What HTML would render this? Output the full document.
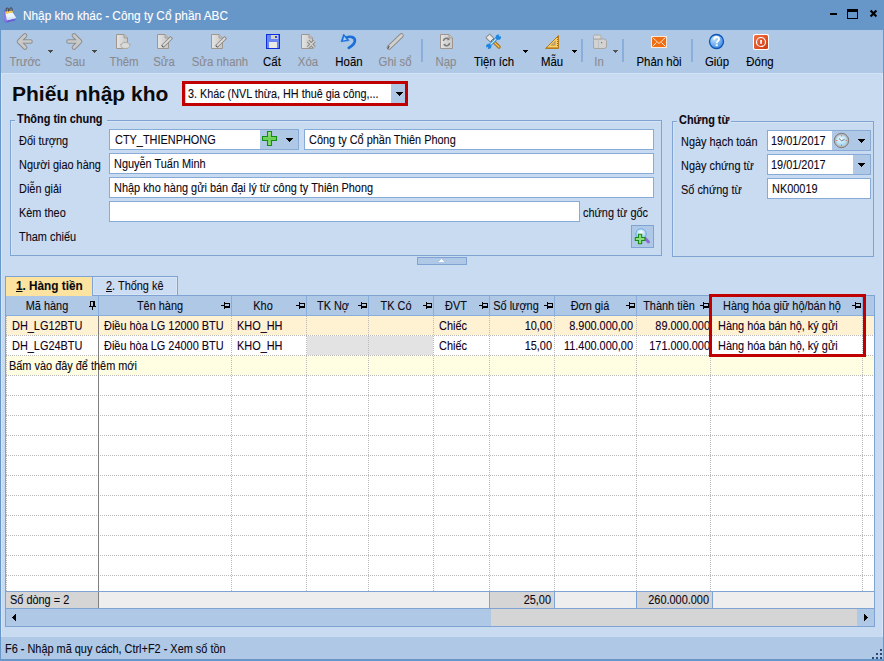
<!DOCTYPE html>
<html><head><meta charset="utf-8">
<style>
*{margin:0;padding:0;box-sizing:border-box}
html,body{width:884px;height:661px;overflow:hidden;background:#6796c8}
body{position:relative;font-family:"Liberation Sans",sans-serif;font-size:11px;color:#0c0814}
.a{position:absolute}
.t{position:absolute;white-space:nowrap;line-height:13px;font-size:12px;transform:scaleX(.91);transform-origin:0 0;-webkit-text-stroke:0.1px currentColor}
.tb{position:absolute;white-space:nowrap;line-height:14px;font-size:12px;text-align:center;width:80px;transform:scaleX(.95);transform-origin:50% 0;-webkit-text-stroke:0.1px currentColor}
.dis{color:#8c8a8e}
.en{color:#000}
.inp{position:absolute;background:#fff;border:1px solid #88aad6}
.btnz{position:absolute;background:#aec8e6}
.dd{position:absolute;width:0;height:0;border-left:4px solid transparent;border-right:4px solid transparent;border-top:4px solid #000}
.tri{position:absolute;width:0;height:0;border-left:3px solid transparent;border-right:3px solid transparent;border-top:3px solid #4a4a4a}
.sep{position:absolute;width:2px;background:#7ea3d1;top:39px;height:23px}
.hl{position:absolute;background:#7fa4d0}
</style></head><body>
<!-- title bar -->
<div class="a" style="left:0;top:0;width:884px;height:30px;background:#6796c8"></div>
<div class="t" style="left:23px;top:9px;font-size:12px;line-height:14px;color:#fff;transform:scaleX(.985);transform-origin:0 0">Nhập kho khác - Công ty Cổ phần ABC</div>
<svg class="a" style="left:0;top:1px" width="22" height="26" viewBox="0 0 22 26">
 <path d="M4 9.5L12.5 9L16 17.5L15 19.5L6.5 21.8L4 20Z" fill="#6b5fd6"/>
 <path d="M4.2 10L5.8 11L7 21L4.2 19.8Z" fill="#8a7ee8"/>
 <path d="M5.5 12.5L12.8 11.2L16.2 17L7 19.3Z" fill="#eaf5ff"/>
 <path d="M6.5 17L15 15.5L16.2 17L7 19.3Z" fill="#cfe6fb"/>
 <path d="M5.3 10.3L12.3 9.3L13 11.6L5.6 12.8Z" fill="#f6cf45"/>
 <path d="M6.3 10.5C5.8 8.5 6.2 7 7.4 7C8.6 7 8.8 8.8 8.4 10.5M10 10C9.6 8.2 10 6.8 11.1 6.8C12.2 6.8 12.3 8.6 12 10" fill="none" stroke="#4d4d57" stroke-width="1.1"/>
</svg>
<!-- window controls -->
<div class="a" style="left:830px;top:13px;width:7px;height:2px;background:#000"></div>
<div class="a" style="left:847px;top:9px;width:11px;height:10px;border:1px solid #000;border-top:3px solid #000"></div>
<svg class="a" style="left:869px;top:9px" width="9" height="9" viewBox="0 0 9 9"><path d="M1.6 1.6L7.4 7.4M7.4 1.6L1.6 7.4" stroke="#000" stroke-width="2.1"/></svg>

<!-- toolbar -->
<div class="a" style="left:1px;top:30px;width:882px;height:43px;background:#aec8e6"></div>
<!-- toolbar icons -->
<svg class="a" style="left:0;top:30px" width="884" height="43" viewBox="0 30 884 43">
 <defs>
  <linearGradient id="gdoc" x1="0" y1="0" x2="1" y2="0"><stop offset="0" stop-color="#e4e4e4"/><stop offset="1" stop-color="#c8c8c8"/></linearGradient>
  <radialGradient id="ghelp" cx="0.35" cy="0.3" r="0.75"><stop offset="0" stop-color="#c4e4ff"/><stop offset="1" stop-color="#3a8ae6"/></radialGradient>
 </defs>
 <!-- Truoc arrow -->
 <g fill="none" stroke-linecap="round" stroke-linejoin="round">
  <path d="M25 35.5L19 41.5L25 47.5M19.5 41.5H30.5" stroke="#8e8e8e" stroke-width="4.6"/>
  <path d="M25 35.5L19 41.5L25 47.5M19.5 41.5H30.5" stroke="#c9c9c9" stroke-width="2.6"/>
  <path d="M74 35.5L80 41.5L74 47.5M79.5 41.5H68.5" stroke="#8e8e8e" stroke-width="4.6"/>
  <path d="M74 35.5L80 41.5L74 47.5M79.5 41.5H68.5" stroke="#c9c9c9" stroke-width="2.6"/>
 </g>
 <path d="M48 50h5v1h-5zM49 51h3v1h-3zM50 52h1v1h-1z" fill="#4a4a4a" shape-rendering="crispEdges"/>
 <path d="M92 50h5v1h-5zM93 51h3v1h-3zM94 52h1v1h-1z" fill="#4a4a4a" shape-rendering="crispEdges"/>
 <!-- Them doc -->
 <path d="M116.5 34.5H124.0L127.5 38.0V48.5H116.5Z" fill="url(#gdoc)" stroke="#9f978f"/><path d="M124.0 34.5V38.0H127.5" fill="#c4c0bc" stroke="#9f978f" stroke-width="0.8"/><path d="M121 45.5a4.3 3 0 1 0 8.6 0a4.3 3 0 1 0 -8.6 0Z" fill="#dadada" stroke="#b0aaa4" stroke-width="0.9"/><path d="M120 44.5h1.5M129 44.5h2M124 41.5v1.2M127 41.5v1.2" stroke="#b4aea8" stroke-width="1"/>
 <!-- Sua doc + pencil -->
 <path d="M157.5 34.5H165.0L168.5 38.0V48.5H157.5Z" fill="url(#gdoc)" stroke="#9f978f"/><path d="M165.0 34.5V38.0H168.5" fill="#c4c0bc" stroke="#9f978f" stroke-width="0.8"/><path d="M163.5 45.5L170.5 38.5" stroke="#8f8a85" stroke-width="3.6" stroke-linecap="square"/><path d="M163.5 45.5L170.5 38.5" stroke="#dedede" stroke-width="1.8" stroke-linecap="square"/><path d="M162.3 46.7l0.9 -0.9" stroke="#444" stroke-width="1.2"/>
 <!-- Sua nhanh -->
 <path d="M211.5 34.5H219.0L222.5 38.0V48.5H211.5Z" fill="url(#gdoc)" stroke="#9f978f"/><path d="M219.0 34.5V38.0H222.5" fill="#c4c0bc" stroke="#9f978f" stroke-width="0.8"/><path d="M217.5 45.5L224.5 38.5" stroke="#8f8a85" stroke-width="3.6" stroke-linecap="square"/><path d="M217.5 45.5L224.5 38.5" stroke="#dedede" stroke-width="1.8" stroke-linecap="square"/><path d="M216.3 46.7l0.9 -0.9" stroke="#444" stroke-width="1.2"/>
 <!-- Cat floppy -->
 <rect x="266" y="34" width="14" height="15" fill="#0b2fdc"/>
 <rect x="267" y="35" width="12" height="13" fill="#6a86f2"/>
 <rect x="271" y="35" width="7" height="4" fill="#d6d2cc"/>
 <rect x="275" y="36" width="2" height="2" fill="#2c48e8"/>
 <rect x="269" y="42" width="8" height="6" fill="#ebe9e6"/>
 <!-- Xoa -->
 <path d="M301.5 34.5H309.0L312.5 38.0V48.5H301.5Z" fill="url(#gdoc)" stroke="#9f978f"/><path d="M309.0 34.5V38.0H312.5" fill="#c4c0bc" stroke="#9f978f" stroke-width="0.8"/><path d="M308 41L314.5 47.5M314.5 41L308 47.5" stroke="#8f8a85" stroke-width="3.4"/><path d="M308 41L314.5 47.5M314.5 41L308 47.5" stroke="#d4d4d4" stroke-width="1.4"/>
 <!-- Hoan undo -->
 <path d="M345.5 38C350.5 35.5 355.5 37 354.8 41.5C354.3 44.5 351 46.5 348.8 47.8" fill="none" stroke="#1a70d8" stroke-width="2.7" stroke-linecap="round"/>
 <path d="M341 41.8L343.6 34L349.2 40.6Z" fill="#1a70d8" stroke="#1a70d8" stroke-width="0.6" stroke-linejoin="round"/>
 <path d="M343 40.5L344.2 36.6L346.8 39.8Z" fill="#a8d4fa"/>
 <!-- Ghi so pencil -->
 <path d="M389 47.5L401.5 35.5" stroke="#8e8a86" stroke-width="4.6" stroke-linecap="round"/>
 <path d="M389 47.5L401.5 35.5" stroke="#d2d2d2" stroke-width="2.8" stroke-linecap="round"/>
 <path d="M387.8 48.8L389.2 46" stroke="#555" stroke-width="1.2"/>
 <!-- Nap doc -->
 <path d="M440.5 34.5H449.0L452.5 38.0V48.5H440.5Z" fill="url(#gdoc)" stroke="#9f978f"/><path d="M449.0 34.5V38.0H452.5" fill="#c4c0bc" stroke="#9f978f" stroke-width="0.8"/><path d="M443.5 41C443.5 38.5 446.5 37.5 448.5 39M449.5 43C449.5 45.5 446.5 46.5 444.5 45" fill="none" stroke="#7a7a7a" stroke-width="1.5"/><path d="M447.5 37.5L450 39.5L447.5 40.5ZM445.5 46.5L443 44.5L445.5 43.5Z" fill="#7a7a7a"/>
 <!-- Tien ich tools -->
 <path d="M492 40L499 47" stroke="#a86a18" stroke-width="3.4" stroke-linecap="round"/>
 <path d="M492 40L499 47" stroke="#f2c24e" stroke-width="1.4" stroke-linecap="round"/>
 <path d="M485.8 37.6L489.6 34.2L493.8 38.2L490.2 41.8Z" fill="#e8e8e8" stroke="#666" stroke-width="0.9"/>
 <path d="M489.5 45.5L497.5 37.5" stroke="#1f86e0" stroke-width="3" stroke-linecap="round"/>
 <path d="M489.5 45.5L497.5 37.5" stroke="#c8ecff" stroke-width="1.1" stroke-linecap="round"/>
 <circle cx="498.3" cy="37.2" r="2.6" fill="#1f86e0"/>
 <circle cx="488.7" cy="46.3" r="2.6" fill="#1f86e0"/>
 <path d="M499.3 36.2l2.5 -2.5" stroke="#aec8e6" stroke-width="1.8"/>
 <path d="M487.7 47.3l-2.5 2.5" stroke="#aec8e6" stroke-width="1.8"/>
 <!-- Mau ruler -->
 <path d="M545.5 48.5L558.5 35.5V48.5Z" fill="#f6d068" stroke="#b57a1e" stroke-width="1" stroke-linejoin="round"/>
 <path d="M550.5 45.5L555.5 40.5V45.5Z" fill="#c08a3a"/>
 <path d="M552.3 44.5L554.5 42.3V44.5Z" fill="#aec8e6"/>
 <rect x="546.5" y="47" width="1" height="1" fill="#a86a18"/><rect x="548.5" y="47" width="1" height="1" fill="#a86a18"/><rect x="550.5" y="47" width="1" height="1" fill="#a86a18"/><rect x="552.5" y="47" width="1" height="1" fill="#a86a18"/><rect x="554.5" y="47" width="1" height="1" fill="#a86a18"/><rect x="556.5" y="47" width="1" height="1" fill="#a86a18"/><rect x="557" y="37" width="1" height="1" fill="#a86a18"/><rect x="557" y="39" width="1" height="1" fill="#a86a18"/><rect x="557" y="41" width="1" height="1" fill="#a86a18"/><rect x="557" y="43" width="1" height="1" fill="#a86a18"/><rect x="557" y="45" width="1" height="1" fill="#a86a18"/>
 <!-- In printer -->
 <path d="M593.5 40.5Q593.5 39 595 39H604.5Q606.5 39 606.5 41.5V46Q606.5 48.5 604 48.5H595Q593.5 48.5 593.5 47Z" fill="#d2d2d2" stroke="#a9a5a1" stroke-width="1"/>
 <path d="M593.5 36.5Q593.5 35 595 35H599.5Q601 35 601 36.5V39H593.5Z" fill="#d8d8d8" stroke="#aaa6a2" stroke-width="0.9"/>
 <path d="M598.5 39.5V48" stroke="#bdbdbd" stroke-width="0.8"/>
 <rect x="601" y="42" width="1.2" height="1.2" fill="#777"/>
 <path d="M613 50h5v1h-5zM614 51h3v1h-3zM615 52h1v1h-1z" fill="#555" shape-rendering="crispEdges"/>
 <!-- Phan hoi envelope -->
 <rect x="651" y="36" width="16" height="12" fill="#fbe9da"/>
 <rect x="652" y="37" width="14" height="10" fill="#f06d12"/>
 <path d="M652.5 37.5L659 43.5L665.5 37.5M652.5 46.5L656.5 42.5M665.5 46.5L661.5 42.5" fill="none" stroke="#fde6d2" stroke-width="1"/>
 <!-- Giup -->
 <circle cx="716.5" cy="41.5" r="7" fill="url(#ghelp)" stroke="#0d55b5" stroke-width="1.3"/>
 <path d="M714.2 39.6C714.2 36.2 719 36.2 719 39.3C719 41 716.7 41.3 716.7 43.2" fill="none" stroke="#fff" stroke-width="1.9"/>
 <rect x="715.7" y="44.3" width="2" height="1.9" fill="#fff"/>
 <!-- Dong -->
 <defs><linearGradient id="gdong" x1="0" y1="0" x2="1" y2="1"><stop offset="0" stop-color="#f07048"/><stop offset="1" stop-color="#d23a0c"/></linearGradient></defs>
 <rect x="753" y="34" width="16" height="16" rx="2" fill="#fff"/>
 <rect x="754" y="35" width="14" height="14" rx="1.5" fill="url(#gdong)"/>
 <circle cx="761" cy="42" r="4.5" fill="none" stroke="#fff" stroke-width="1.2"/>
 <rect x="760.2" y="40" width="1.7" height="3.8" fill="#fff"/>
 <!-- separators -->
 <rect x="421" y="39" width="2" height="23" fill="#8aaedb"/>
 <rect x="581" y="39" width="2" height="23" fill="#8aaedb"/>
 <rect x="622" y="39" width="2" height="23" fill="#8aaedb"/>
 <rect x="691" y="39" width="2" height="23" fill="#8aaedb"/>
 <path d="M523 50h5v1h-5zM524 51h3v1h-3zM525 52h1v1h-1z" fill="#000" shape-rendering="crispEdges"/>
 <path d="M572 50h5v1h-5zM573 51h3v1h-3zM574 52h1v1h-1z" fill="#000" shape-rendering="crispEdges"/>
</svg>
<!-- toolbar labels -->
<div class="tb dis" style="left:-15.5px;top:55px">Trước</div>
<div class="tb dis" style="left:34.5px;top:55px">Sau</div>
<div class="tb dis" style="left:84.25px;top:55px">Thêm</div>
<div class="tb dis" style="left:124px;top:55px">Sửa</div>
<div class="tb dis" style="left:179.5px;top:55px">Sửa nhanh</div>
<div class="tb en" style="left:232.4px;top:55px">Cất</div>
<div class="tb dis" style="left:267.5px;top:55px">Xóa</div>
<div class="tb en" style="left:308.5px;top:55px">Hoãn</div>
<div class="tb dis" style="left:355.3px;top:55px">Ghi sổ</div>
<div class="tb dis" style="left:406px;top:55px">Nạp</div>
<div class="tb en" style="left:454px;top:55px">Tiện ích</div>
<div class="tb en" style="left:511.5px;top:55px">Mẫu</div>
<div class="tb dis" style="left:559.2px;top:55px">In</div>
<div class="tb en" style="left:619.3px;top:55px">Phản hồi</div>
<div class="tb en" style="left:677px;top:55px">Giúp</div>
<div class="tb en" style="left:720.4px;top:55px">Đóng</div>

<!-- content -->
<div class="a" style="left:1px;top:73px;width:882px;height:564px;background:#c9dbf1"></div>
<div class="a" style="left:1px;top:73px;width:1px;height:564px;background:#d6e4f6"></div>
<div class="a" style="left:882px;top:73px;width:1px;height:564px;background:#d6e4f6"></div>
<div class="a" style="left:1px;top:73px;width:882px;height:1px;background:#d3e2f5"></div>
<!-- header title -->
<div class="a" style="left:12px;top:82px;font-size:21px;line-height:24px;font-weight:bold;color:#0a0a0a;white-space:nowrap">Phiếu nhập kho</div>
<!-- combo red -->
<div class="a" style="left:182px;top:81px;width:226px;height:25px;border:3px solid #c00000;background:#fff"></div>
<div class="a" style="left:185px;top:84px;width:1px;height:19px;background:#b9d4f2"></div>
<div class="btnz" style="left:391px;top:84px;width:14px;height:19px"></div>
<svg class="a" style="left:396px;top:92px" width="7" height="4" shape-rendering="crispEdges"><path d="M0 0h7v1H0zM1 1h5v1H1zM2 2h3v1H2zM3 3h1v1H3z" fill="#000"/></svg>
<div class="t" style="left:188px;top:88px;transform:scaleX(.9)">3. Khác (NVL thừa, HH thuê gia công,...</div>

<!-- group Thong tin chung -->
<div class="a" style="left:10px;top:120px;width:652px;height:136px;border:1px solid #7fa3d3;box-shadow:inset 1px 1px 0 #d6e4f5"></div>
<div class="a" style="left:15px;top:114px;width:92px;height:10px;background:#c9dbf1"></div>
<div class="t" style="left:17px;top:113px;font-weight:bold">Thông tin chung</div>
<div class="t" style="left:19px;top:135px">Đối tượng</div>
<div class="t" style="left:19px;top:159px">Người giao hàng</div>
<div class="t" style="left:19px;top:183px">Diễn giải</div>
<div class="t" style="left:19px;top:207px">Kèm theo</div>
<div class="t" style="left:19px;top:231px">Tham chiếu</div>

<div class="inp" style="left:109px;top:129px;width:190px;height:21px"></div>
<div class="btnz" style="left:260px;top:130px;width:38px;height:19px"></div>
<svg class="a" style="left:262px;top:131px" width="16" height="16" viewBox="0 0 16 16">
 <defs><linearGradient id="gplus" x1="0" y1="0" x2="0" y2="1"><stop offset="0" stop-color="#a8e890"/><stop offset="0.5" stop-color="#6ccf55"/><stop offset="1" stop-color="#8ee070"/></linearGradient></defs>
 <path d="M5.5 0.5H9.5V5.5H14.5V9.5H9.5V14.5H5.5V9.5H0.5V5.5H5.5Z" fill="url(#gplus)" stroke="#168a16" stroke-width="1.1"/>
</svg>
<svg class="a" style="left:286px;top:138px" width="7" height="4" shape-rendering="crispEdges"><path d="M0 0h7v1H0zM1 1h5v1H1zM2 2h3v1H2zM3 3h1v1H3z" fill="#000"/></svg>
<div class="t" style="left:115px;top:134px">CTY_THIENPHONG</div>
<div class="inp" style="left:304px;top:129px;width:350px;height:21px"></div>
<div class="t" style="left:309px;top:134px">Công ty Cổ phần Thiên Phong</div>
<div class="inp" style="left:109px;top:153px;width:545px;height:21px"></div>
<div class="t" style="left:114px;top:158px">Nguyễn Tuấn Minh</div>
<div class="inp" style="left:109px;top:177px;width:545px;height:21px"></div>
<div class="t" style="left:114px;top:182px">Nhập kho hàng gửi bán đại lý từ công ty Thiên Phong</div>
<div class="inp" style="left:109px;top:201px;width:471px;height:21px"></div>
<div class="t" style="left:583px;top:207px">chứng từ gốc</div>
<div class="a" style="left:631px;top:225px;width:23px;height:23px;border:1px solid #7fa3d3;background:#aec8e6"></div>
<svg class="a" style="left:633px;top:227px" width="20" height="20" viewBox="0 0 20 20">
 <defs><radialGradient id="glens" cx="0.5" cy="0.35" r="0.6"><stop offset="0" stop-color="#ffffff"/><stop offset="1" stop-color="#8cc8f0"/></radialGradient></defs>
 <circle cx="8" cy="7" r="5.2" fill="url(#glens)" stroke="#6aaee6" stroke-width="1"/>
 <path d="M12.3 11.5L15.5 15" stroke="#8a6ed6" stroke-width="3" stroke-linecap="round"/>
 <path d="M5.5 7.3H8.7V10.5H11.9V13.5H8.7V16.7H5.5V13.5H2.3V10.5H5.5Z" fill="#8edc7a" stroke="#1a8a1a" stroke-width="1.1"/>
</svg>
<!-- collapse button -->
<div class="a" style="left:417px;top:257px;width:50px;height:8px;border:1px solid #7fa3d3;background:#aec8e6"></div>
<svg class="a" style="left:439px;top:259px" width="5" height="3" shape-rendering="crispEdges"><path d="M2 0h1v1h-1zM1 1h3v1h-3zM0 2h5v1h-5z" fill="#fff"/></svg>

<!-- group Chung tu -->
<div class="a" style="left:672px;top:121px;width:202px;height:136px;border:1px solid #7fa3d3;box-shadow:inset 1px 1px 0 #d6e4f5"></div>
<div class="a" style="left:677px;top:114px;width:54px;height:10px;background:#c9dbf1"></div>
<div class="t" style="left:679px;top:114px;font-weight:bold">Chứng từ</div>
<div class="t" style="left:681px;top:136px">Ngày hạch toán</div>
<div class="t" style="left:681px;top:160px">Ngày chứng từ</div>
<div class="t" style="left:681px;top:184px">Số chứng từ</div>
<div class="inp" style="left:767px;top:130px;width:104px;height:21px"></div>
<div class="btnz" style="left:832px;top:131px;width:38px;height:19px"></div>
<svg class="a" style="left:833px;top:132px" width="17" height="17" viewBox="0 0 17 17">
 <defs><radialGradient id="gclk" cx="0.45" cy="0.4" r="0.6"><stop offset="0" stop-color="#f4fbff"/><stop offset="1" stop-color="#9ed4f0"/></radialGradient></defs>
 <circle cx="8.5" cy="8.5" r="7.2" fill="#b9b9b9" stroke="#7a7a7a" stroke-width="1"/>
 <circle cx="8.5" cy="8.5" r="5.6" fill="url(#gclk)"/>
 <path d="M8.5 8.8L6 6.5M8.5 8.8L11.5 7.5" stroke="#555" stroke-width="0.8"/>
 <circle cx="8.5" cy="3.8" r="0.6" fill="#e05030"/><circle cx="8.5" cy="13.2" r="0.6" fill="#e05030"/><circle cx="3.8" cy="8.5" r="0.6" fill="#e05030"/><circle cx="13.2" cy="8.5" r="0.6" fill="#e05030"/>
</svg>
<svg class="a" style="left:858px;top:139px" width="7" height="4" shape-rendering="crispEdges"><path d="M0 0h7v1H0zM1 1h5v1H1zM2 2h3v1H2zM3 3h1v1H3z" fill="#000"/></svg>
<div class="t" style="left:771px;top:135px">19/01/2017</div>
<div class="inp" style="left:767px;top:154px;width:104px;height:21px"></div>
<div class="btnz" style="left:853px;top:155px;width:17px;height:19px"></div>
<svg class="a" style="left:858px;top:163px" width="7" height="4" shape-rendering="crispEdges"><path d="M0 0h7v1H0zM1 1h5v1H1zM2 2h3v1H2zM3 3h1v1H3z" fill="#000"/></svg>
<div class="t" style="left:771px;top:159px">19/01/2017</div>
<div class="inp" style="left:767px;top:178px;width:104px;height:21px"></div>
<div class="t" style="left:772px;top:183px">NK00019</div>

<!-- grid -->
<div class="a" style="left:5px;top:295px;width:870px;height:332px;border:1px solid #7fa3d3;background:#fff"></div>
<div class="a" style="left:5px;top:276px;width:87px;height:20px;border:1px solid #7fa3d3;border-bottom:none;border-right:none;background:#fde3a0"></div>
<div class="a" style="left:92px;top:276px;width:86px;height:20px;border:1px solid #7fa3d3;background:#ccdcf2;box-shadow:inset 0 0 0 1px #d6e4f5"></div>
<div class="t" style="left:16px;top:280px;font-weight:bold;color:#0a0a0a;transform:scaleX(.98)"><u>1</u>. Hàng tiền</div>
<div class="t" style="left:106px;top:280px;color:#0c0814"><u>2</u>. Thống kê</div>
<div class="a" style="left:6px;top:296px;width:868px;height:20px;background:#aec8e6;border-bottom:1px solid #8aaedb"></div>
<div class="a" style="left:98px;top:296px;width:1px;height:19px;background:#8aaedb"></div>
<div class="a" style="left:231px;top:296px;width:1px;height:19px;background:#8aaedb"></div>
<div class="a" style="left:306px;top:296px;width:1px;height:19px;background:#8aaedb"></div>
<div class="a" style="left:368px;top:296px;width:1px;height:19px;background:#8aaedb"></div>
<div class="a" style="left:433px;top:296px;width:1px;height:19px;background:#8aaedb"></div>
<div class="a" style="left:489px;top:296px;width:1px;height:19px;background:#8aaedb"></div>
<div class="a" style="left:554px;top:296px;width:1px;height:19px;background:#8aaedb"></div>
<div class="a" style="left:636px;top:296px;width:1px;height:19px;background:#8aaedb"></div>
<div class="a" style="left:710px;top:296px;width:1px;height:19px;background:#8aaedb"></div>
<div class="a" style="left:862px;top:296px;width:1px;height:19px;background:#8aaedb"></div>
<div class="a" style="left:6px;top:316px;width:868px;height:19px;background:#fff2d2"></div>
<div class="a" style="left:6px;top:356px;width:868px;height:19px;background:#fffde2"></div>
<div class="a" style="left:307px;top:336px;width:126px;height:19px;background:#e3e3e3"></div>
<div class="a" style="left:6px;top:335px;width:868px;height:1px;background-image:linear-gradient(90deg,#bababa 50%,transparent 50%);background-size:2px 1px"></div>
<div class="a" style="left:6px;top:355px;width:868px;height:1px;background-image:linear-gradient(90deg,#bababa 50%,transparent 50%);background-size:2px 1px"></div>
<div class="a" style="left:6px;top:375px;width:868px;height:1px;background-image:linear-gradient(90deg,#bababa 50%,transparent 50%);background-size:2px 1px"></div>
<div class="a" style="left:6px;top:395px;width:868px;height:1px;background-image:linear-gradient(90deg,#bababa 50%,transparent 50%);background-size:2px 1px"></div>
<div class="a" style="left:6px;top:415px;width:868px;height:1px;background-image:linear-gradient(90deg,#bababa 50%,transparent 50%);background-size:2px 1px"></div>
<div class="a" style="left:6px;top:435px;width:868px;height:1px;background-image:linear-gradient(90deg,#bababa 50%,transparent 50%);background-size:2px 1px"></div>
<div class="a" style="left:6px;top:455px;width:868px;height:1px;background-image:linear-gradient(90deg,#bababa 50%,transparent 50%);background-size:2px 1px"></div>
<div class="a" style="left:6px;top:475px;width:868px;height:1px;background-image:linear-gradient(90deg,#bababa 50%,transparent 50%);background-size:2px 1px"></div>
<div class="a" style="left:6px;top:495px;width:868px;height:1px;background-image:linear-gradient(90deg,#bababa 50%,transparent 50%);background-size:2px 1px"></div>
<div class="a" style="left:6px;top:515px;width:868px;height:1px;background-image:linear-gradient(90deg,#bababa 50%,transparent 50%);background-size:2px 1px"></div>
<div class="a" style="left:6px;top:535px;width:868px;height:1px;background-image:linear-gradient(90deg,#bababa 50%,transparent 50%);background-size:2px 1px"></div>
<div class="a" style="left:6px;top:555px;width:868px;height:1px;background-image:linear-gradient(90deg,#bababa 50%,transparent 50%);background-size:2px 1px"></div>
<div class="a" style="left:6px;top:575px;width:868px;height:1px;background-image:linear-gradient(90deg,#bababa 50%,transparent 50%);background-size:2px 1px"></div>
<div class="a" style="left:231px;top:316px;width:1px;height:275px;background-image:linear-gradient(#bababa 50%,transparent 50%);background-size:1px 2px"></div>
<div class="a" style="left:306px;top:316px;width:1px;height:275px;background-image:linear-gradient(#bababa 50%,transparent 50%);background-size:1px 2px"></div>
<div class="a" style="left:368px;top:316px;width:1px;height:275px;background-image:linear-gradient(#bababa 50%,transparent 50%);background-size:1px 2px"></div>
<div class="a" style="left:433px;top:316px;width:1px;height:275px;background-image:linear-gradient(#bababa 50%,transparent 50%);background-size:1px 2px"></div>
<div class="a" style="left:489px;top:316px;width:1px;height:275px;background-image:linear-gradient(#bababa 50%,transparent 50%);background-size:1px 2px"></div>
<div class="a" style="left:554px;top:316px;width:1px;height:275px;background-image:linear-gradient(#bababa 50%,transparent 50%);background-size:1px 2px"></div>
<div class="a" style="left:636px;top:316px;width:1px;height:275px;background-image:linear-gradient(#bababa 50%,transparent 50%);background-size:1px 2px"></div>
<div class="a" style="left:710px;top:316px;width:1px;height:275px;background-image:linear-gradient(#bababa 50%,transparent 50%);background-size:1px 2px"></div>
<div class="a" style="left:862px;top:316px;width:1px;height:275px;background-image:linear-gradient(#bababa 50%,transparent 50%);background-size:1px 2px"></div>
<div class="a" style="left:6px;top:316px;width:1px;height:275px;background-image:linear-gradient(#bababa 50%,transparent 50%);background-size:1px 2px"></div>
<div class="a" style="left:98px;top:316px;width:1px;height:275px;background:#808080"></div>
<div class="t" style="left:-53px;top:300px;width:200px;text-align:center;transform-origin:50% 0;color:#0c0814">Mã hàng</div>
<div class="t" style="left:59.5px;top:300px;width:200px;text-align:center;transform-origin:50% 0;color:#0c0814">Tên hàng</div>
<div class="t" style="left:163.39999999999998px;top:300px;width:200px;text-align:center;transform-origin:50% 0;color:#0c0814">Kho</div>
<div class="t" style="left:232.60000000000002px;top:300px;width:200px;text-align:center;transform-origin:50% 0;color:#0c0814">TK Nợ</div>
<div class="t" style="left:296.2px;top:300px;width:200px;text-align:center;transform-origin:50% 0;color:#0c0814">TK Có</div>
<div class="t" style="left:355.5px;top:300px;width:200px;text-align:center;transform-origin:50% 0;color:#0c0814">ĐVT</div>
<div class="t" style="left:416.20000000000005px;top:300px;width:200px;text-align:center;transform-origin:50% 0;color:#0c0814">Số lượng</div>
<div class="t" style="left:489.70000000000005px;top:300px;width:200px;text-align:center;transform-origin:50% 0;color:#0c0814">Đơn giá</div>
<div class="t" style="left:568.6px;top:300px;width:200px;text-align:center;transform-origin:50% 0;color:#0c0814">Thành tiền</div>
<div class="t" style="left:682.2px;top:300px;width:200px;text-align:center;transform-origin:50% 0;color:#0c0814">Hàng hóa giữ hộ/bán hộ</div>
<svg class="a" style="left:0;top:296px" width="884" height="20" viewBox="0 296 884 20" shape-rendering="crispEdges"><path d="M90 301h5v1h-5zM90 301h1v5h-1zM93 301h2v5h-2zM89 306h7v1h-7zM92 307h1v3h-1z" fill="#000"/><path d="M221 305h3v1h-3zM224 302h1v7h-1zM225 303h5v1h-5zM225 306h5v2h-5zM229 303h1v5h-1z" fill="#000"/><path d="M296 305h3v1h-3zM299 302h1v7h-1zM300 303h5v1h-5zM300 306h5v2h-5zM304 303h1v5h-1z" fill="#000"/><path d="M358 305h3v1h-3zM361 302h1v7h-1zM362 303h5v1h-5zM362 306h5v2h-5zM366 303h1v5h-1z" fill="#000"/><path d="M423 305h3v1h-3zM426 302h1v7h-1zM427 303h5v1h-5zM427 306h5v2h-5zM431 303h1v5h-1z" fill="#000"/><path d="M479 305h3v1h-3zM482 302h1v7h-1zM483 303h5v1h-5zM483 306h5v2h-5zM487 303h1v5h-1z" fill="#000"/><path d="M544 305h3v1h-3zM547 302h1v7h-1zM548 303h5v1h-5zM548 306h5v2h-5zM552 303h1v5h-1z" fill="#000"/><path d="M626 305h3v1h-3zM629 302h1v7h-1zM630 303h5v1h-5zM630 306h5v2h-5zM634 303h1v5h-1z" fill="#000"/><path d="M700 305h3v1h-3zM703 302h1v7h-1zM704 303h5v1h-5zM704 306h5v2h-5zM708 303h1v5h-1z" fill="#000"/><path d="M852 305h3v1h-3zM855 302h1v7h-1zM856 303h5v1h-5zM856 306h5v2h-5zM860 303h1v5h-1z" fill="#000"/></svg>
<div class="t" style="left:12px;top:320px;color:#10001c">DH_LG12BTU</div>
<div class="t" style="left:104px;top:320px;color:#10001c">Điều hòa LG 12000 BTU</div>
<div class="t" style="left:237px;top:320px;color:#10001c">KHO_HH</div>
<div class="t" style="left:439px;top:320px;color:#10001c">Chiếc</div>
<div class="t" style="left:490px;top:320px;width:62px;text-align:right;transform-origin:100% 0;color:#10001c">10,00</div>
<div class="t" style="left:555px;top:320px;width:78px;text-align:right;transform-origin:100% 0;color:#10001c">8.900.000,00</div>
<div class="t" style="left:637px;top:320px;width:73px;text-align:right;transform-origin:100% 0;color:#10001c">89.000.000</div>
<div class="t" style="left:718px;top:320px;color:#10001c">Hàng hóa bán hộ, ký gửi</div>
<div class="t" style="left:12px;top:340px;color:#10001c">DH_LG24BTU</div>
<div class="t" style="left:104px;top:340px;color:#10001c">Điều hòa LG 24000 BTU</div>
<div class="t" style="left:237px;top:340px;color:#10001c">KHO_HH</div>
<div class="t" style="left:439px;top:340px;color:#10001c">Chiếc</div>
<div class="t" style="left:490px;top:340px;width:62px;text-align:right;transform-origin:100% 0;color:#10001c">15,00</div>
<div class="t" style="left:555px;top:340px;width:78px;text-align:right;transform-origin:100% 0;color:#10001c">11.400.000,00</div>
<div class="t" style="left:637px;top:340px;width:73px;text-align:right;transform-origin:100% 0;color:#10001c">171.000.000</div>
<div class="t" style="left:718px;top:340px;color:#10001c">Hàng hóa bán hộ, ký gửi</div>
<div class="t" style="left:9px;top:360px;color:#0c0814">Bấm vào đây để thêm mới</div>
<div class="a" style="left:6px;top:591px;width:868px;height:1px;background:#7fa3d3"></div>
<div class="a" style="left:6px;top:592px;width:868px;height:16px;background:#eeeeee"></div>
<div class="a" style="left:6px;top:592px;width:92px;height:16px;background:#d5d5d5"></div>
<div class="a" style="left:98px;top:592px;width:1px;height:16px;background:#808080"></div>
<div class="a" style="left:489px;top:591px;width:66px;height:17px;border:1px solid #7fa3d3;border-bottom:none;background:#d5d5d5"></div>
<div class="a" style="left:636px;top:591px;width:77px;height:17px;border:1px solid #7fa3d3;border-bottom:none;background:#d5d5d5"></div>
<div class="t" style="left:10px;top:594px;color:#0c0814">Số dòng = 2</div>
<div class="t" style="left:490px;top:594px;width:61px;text-align:right;transform-origin:100% 0;color:#0c0814">25,00</div>
<div class="t" style="left:637px;top:594px;width:72px;text-align:right;transform-origin:100% 0;color:#0c0814">260.000.000</div>
<div class="a" style="left:6px;top:608px;width:868px;height:18px;background:#aec8e6;border-top:1px solid #7fa3d3"></div>
<div class="a" style="left:491px;top:609px;width:366px;height:17px;background:#d5d5d5"></div>
<svg class="a" style="left:12px;top:614px" width="4" height="7" shape-rendering="crispEdges"><path d="M3 0h1v7h-1zM2 1h1v5h-1zM1 2h1v3h-1zM0 3h1v1h-1z" fill="#000"/></svg>
<svg class="a" style="left:864px;top:614px" width="4" height="7" shape-rendering="crispEdges"><path d="M0 0h1v7h-1zM1 1h1v5h-1zM2 2h1v3h-1zM3 3h1v1h-1z" fill="#000"/></svg>
<div class="a" style="left:709px;top:294px;width:157px;height:63px;border:3px solid #c00000"></div>
<!-- status bar -->
<div class="a" style="left:1px;top:637px;width:882px;height:22px;background:#aec8e6"></div>
<div class="t" style="left:5px;top:643px">F6 - Nhập mã quy cách, Ctrl+F2 - Xem số tồn</div>

<svg class="a" style="left:870px;top:647px" width="13" height="13" shape-rendering="crispEdges"><path d="M10 2h2v2h-2zM6 6h2v2h-2zM10 6h2v2h-2zM2 10h2v2h-2zM6 10h2v2h-2zM10 10h2v2h-2z" fill="#2b4a78"/></svg>
</body></html>
